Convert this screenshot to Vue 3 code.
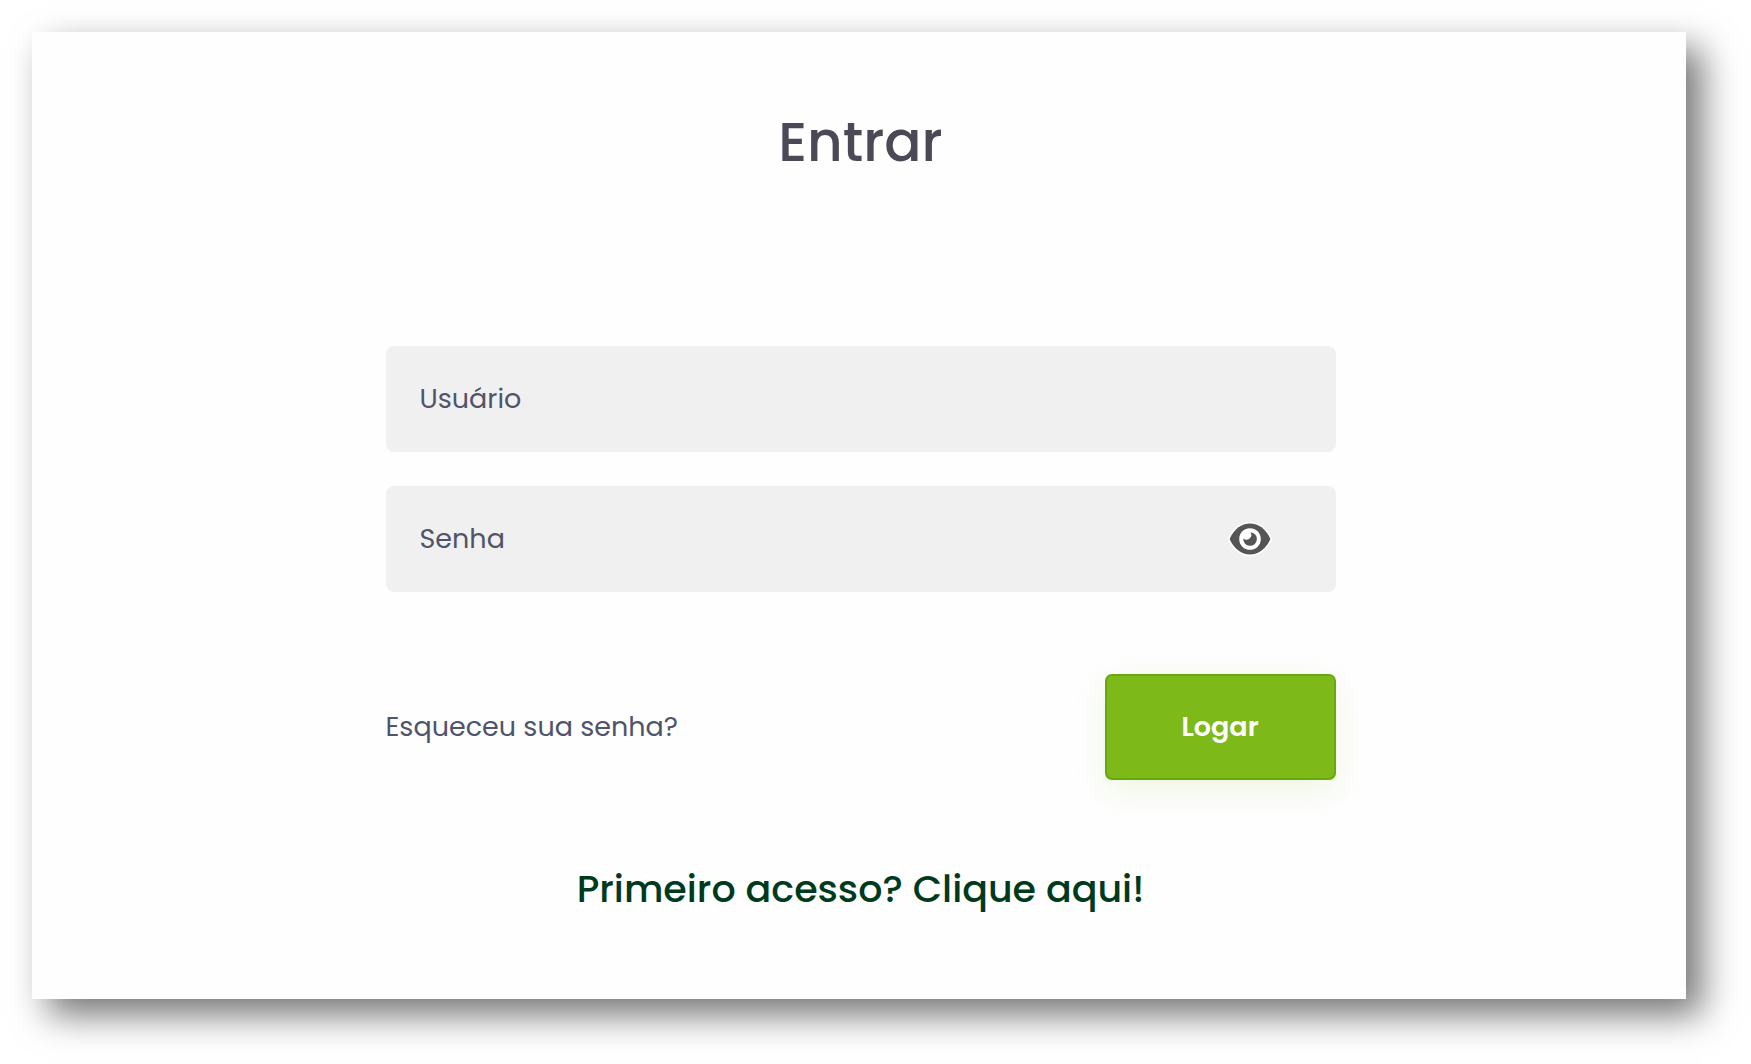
<script setup>
import { ref } from 'vue'

const user = ref('')
const password = ref('')
const visible = ref(false)
</script>

<template>
  <main class="page">
    <section class="card">
      <h1 class="title">Entrar</h1>
      <form class="form" @submit.prevent>
        <div class="field">
          <input id="user" v-model="user" type="text" placeholder="Usuário" aria-label="Usuário" autocomplete="username" />
        </div>
        <div class="field">
          <input
            id="password"
            v-model="password"
            :type="visible ? 'text' : 'password'"
            placeholder="Senha"
            aria-label="Senha"
            autocomplete="current-password"
          />
          <button class="toggle" type="button" aria-label="Mostrar senha" @click="visible = !visible">
            <svg viewBox="0 0 46 36" width="46" height="36" aria-hidden="true">
              <path
                d="M3 16.900C7.400 8 14.400 2.500 23 2.500S38.600 8 43 16.900q.5 1.100 0 2.200C38.600 28 31.600 33.500 23 33.500S7.400 28 3 19.100q-.5-1.100 0-2.200z"
                fill="#555"
                stroke="#fff"
                stroke-width="3"
                paint-order="stroke"
              />
              <circle cx="23" cy="18" r="10.800" fill="#fff" />
              <path d="M23.500 11.200a6.800 6.800 0 1 1-7.200 6.200 4.800 4.800 0 0 0 7.200-6.200z" fill="#555" />
            </svg>
          </button>
        </div>
        <div class="actions">
          <a class="forgot" href="#">Esqueceu sua senha?</a>
          <button class="submit" type="submit">Logar</button>
        </div>
      </form>
      <a class="first" href="#">Primeiro acesso? Clique aqui!</a>
    </section>
  </main>
</template>

<style>
body {
  margin: 0;
  background: #fff;
}
</style>

<style scoped>
.page {
  box-sizing: border-box;
  padding: 32px 65px 65px 32px;
  font-family: Poppins, Inter, sans-serif;
}
.card {
  display: flex;
  flex-direction: column;
  align-items: center;
  box-sizing: border-box;
  padding: 72px 32px 82px 35px;
  background: #fefefe;
  box-shadow: 16px 16px 34px rgba(0, 0, 0, 0.54);
}
.title {
  margin: 0 0 166px;
  font-size: 55px;
  line-height: 76px;
  font-weight: 500;
  color: #4a4955;
}
.form {
  display: flex;
  flex-direction: column;
  gap: 34px;
  width: 60%;
  max-width: 950px;
}
.field {
  display: flex;
  align-items: center;
  box-sizing: border-box;
  height: 106px;
  padding: 0 63px 0 34px;
  border-radius: 8px;
  background: #f0f0f0;
}
.field input {
  flex: 1;
  min-width: 0;
  height: 100%;
  padding: 0;
  border: 0;
  outline: 0;
  background: transparent;
  font: inherit;
  font-size: 27px;
  color: #50546a;
}
.field input::placeholder {
  color: #50546a;
  opacity: 1;
}
.toggle {
  display: flex;
  padding: 0;
  border: 0;
  background: transparent;
  cursor: pointer;
}
.actions {
  display: flex;
  align-items: center;
  justify-content: space-between;
  margin-top: 48px;
}
.forgot {
  font-size: 27px;
  line-height: 42px;
  color: #50546a;
  text-decoration: none;
}
.submit {
  width: 231px;
  height: 106px;
  border: 2px solid #68a80d;
  border-radius: 7px;
  background: #7eb91a;
  box-shadow: 0 10px 32px rgba(126, 185, 26, 0.12);
  font: inherit;
  font-size: 27px;
  font-weight: 600;
  color: #fff;
  cursor: pointer;
}
.first {
  margin-top: 81px;
  font-size: 38px;
  line-height: 56px;
  font-weight: 500;
  color: #003a1d;
  text-decoration: none;
}
</style>
